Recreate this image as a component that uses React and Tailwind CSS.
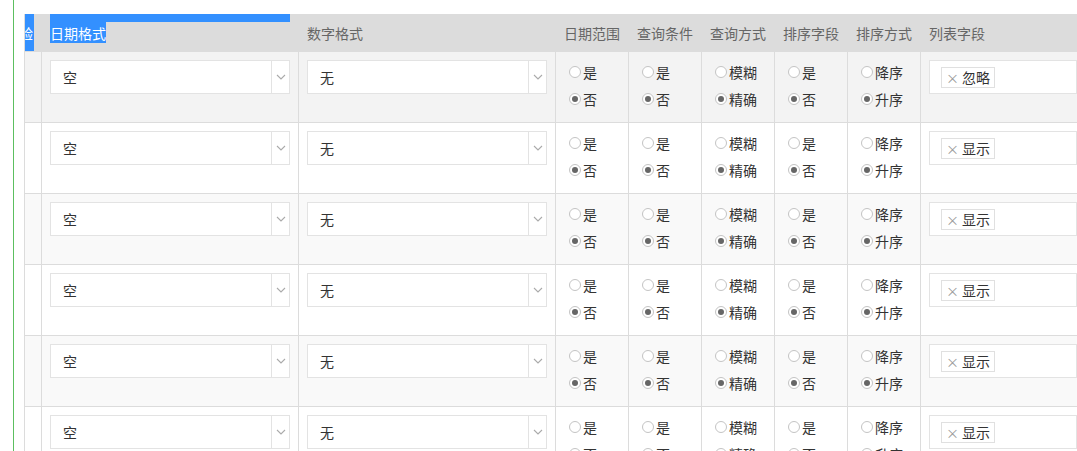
import React from "react";

const rows = [
  { tag: "忽略", bg: "bg-[#f3f3f3]" },
  { tag: "显示", bg: "bg-white" },
  { tag: "显示", bg: "bg-[#f9f9f9]" },
  { tag: "显示", bg: "bg-white" },
  { tag: "显示", bg: "bg-[#f9f9f9]" },
  { tag: "显示", bg: "bg-white" },
];

const radioCols = [
  ["是", "否"],
  ["是", "否"],
  ["模糊", "精确"],
  ["是", "否"],
  ["降序", "升序"],
];

const heads = ["日期范围", "查询条件", "查询方式", "排序字段", "排序方式"];

const Chevron = () => (
  <svg width="10" height="6" viewBox="0 0 10 6" fill="none">
    <path d="M1 1l4 4 4-4" stroke="#aaa" strokeWidth="1.1" />
  </svg>
);

const Select = ({ value }) => (
  <div className="flex h-[34px] w-full border border-[#e3e3e3] bg-white">
    <div className="flex flex-1 items-center pl-[12px] text-[#333]">{value}</div>
    <div className="flex w-[18px] items-center justify-center border-l border-[#e3e3e3]">
      <Chevron />
    </div>
  </div>
);

const Radio = ({ checked, label }) => (
  <div className="flex h-[27px] items-center">
    <span className="ml-[5px] mr-[2px] flex h-[12px] w-[12px] items-center justify-center rounded-full border border-[#c4c4c4] bg-white">
      {checked && <span className="h-[6px] w-[6px] rounded-full bg-[#666]" />}
    </span>
    <span className="text-[#333]">{label}</span>
  </div>
);

const App = () => {
  return (
    <div
      className="flex h-[451px] w-[1077px] overflow-hidden bg-white text-[14px] leading-none"
      style={{ fontFamily: '"Noto Sans CJK SC", "Noto Sans", sans-serif' }}
    >
      <div className="ml-[13px] h-full w-px shrink-0 bg-[#5cbf60]" />
      <div className="ml-[10px] mt-[14px] shrink-0 border-l border-[#dcdcdc]">
        {/* header */}
        <div className="flex h-[37px] bg-[#dcdcdc] text-[#666]">
          <div className="w-[17px] shrink-0 pr-[8px]">
            <div className="flex h-full items-center overflow-hidden bg-[#3390ff] text-white">
              <span className="-ml-[6px]">验</span>
            </div>
          </div>
          <div className="relative w-[257px] shrink-0 pl-[8px]">
            <div className="h-[8px] w-[240px] bg-[#3390ff]" />
            <div className="inline-flex h-[21px] items-center bg-[#3390ff] text-white">日期格式</div>
          </div>
          <div className="flex w-[257px] shrink-0 items-center pl-[8px]">数字格式</div>
          {heads.map((h) => (
            <div key={h} className="flex w-[73px] shrink-0 items-center pl-[8px]">
              {h}
            </div>
          ))}
          <div className="flex w-[165px] shrink-0 items-center pl-[8px]">列表字段</div>
        </div>

        {rows.map((r, i) => (
          <div key={i} className={`flex h-[71px] border-t border-[#dcdcdc] ${r.bg}`}>
            <div className="w-[17px] shrink-0 border-r border-[#dcdcdc]" />
            <div className="w-[257px] shrink-0 border-r border-[#dcdcdc] px-[8px] pt-[8px]">
              <Select value="空" />
            </div>
            <div className="w-[257px] shrink-0 border-r border-[#dcdcdc] px-[8px] pt-[8px]">
              <Select value="无" />
            </div>
            {radioCols.map((c, j) => (
              <div key={j} className="w-[73px] shrink-0 border-r border-[#dcdcdc] pl-[8px] pt-[6px]">
                <Radio label={c[0]} />
                <Radio label={c[1]} checked />
              </div>
            ))}
            <div className="w-[165px] shrink-0 pl-[8px] pt-[8px]">
              <div className="flex h-[34px] w-[148px] items-center border border-[#e3e3e3] bg-white pl-[11px]">
                <span className="flex h-[21px] items-center border border-[#e0e0e0] bg-white px-[4px] text-[#333]">
                  <span className="mr-[3px] text-[13px] text-[#999]">×</span>
                  {r.tag}
                </span>
              </div>
            </div>
          </div>
        ))}
      </div>
    </div>
  );
};

export default App;
